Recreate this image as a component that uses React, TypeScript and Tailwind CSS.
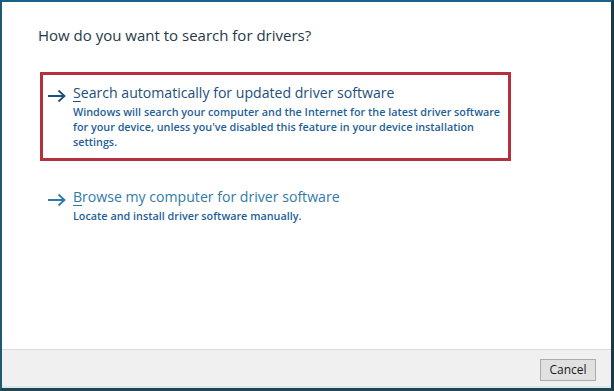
import React from "react";

const font = { fontFamily: '"Open Sans", "Noto Sans", sans-serif' };

function Arrow({ className }: { className?: string }) {
  return (
    <svg width="20" height="14" viewBox="0 0 20 14" className={className}>
      <path d="M1 7h16M11.5 1.5 17.5 7l-6 5.5" fill="none" stroke="currentColor" strokeWidth="1.8" />
    </svg>
  );
}

function Option({
  first,
  rest,
  lines,
  tone,
}: {
  first: string;
  rest: string;
  lines: string[];
  tone: string;
}) {
  return (
    <div className="flex items-start">
      <Arrow className={`mt-[6px] w-[20px] shrink-0 ${tone}`} />
      <div className="ml-[6px]">
        <div className={`whitespace-nowrap text-[14.1px] leading-[20px] ${tone}`}>
          <span className="underline decoration-1 underline-offset-[3px]">{first}</span>
          {rest}
        </div>
        <div className="mt-[1px] whitespace-nowrap text-[10.8px] font-semibold leading-[15px] text-[#1f5f99]">
          {lines.map((l) => (
            <div key={l}>{l}</div>
          ))}
        </div>
      </div>
    </div>
  );
}

export default function App() {
  return (
    <div
      style={font}
      className="flex h-[391px] w-[614px] flex-col border-t-2 border-l-2 border-r-[3px] border-b-[3px] border-t-[#1d5f86] border-l-[#1f5a75] border-r-[#1b3946] border-b-[#24434f] bg-white"
    >
      <div className="flex-1 pl-[36px] pt-[22px]">
        <h1 className="text-[15px] leading-[22px] text-[#27384a]">How do you want to search for drivers?</h1>

        <div className="ml-[2px] mt-[26px] h-[89px] w-[471px] border-[3px] border-[#b5303c] pl-[4px] pt-[8px]">
          <Option
            first="S"
            rest="earch automatically for updated driver software"
            tone="text-[#1c4f7c]"
            lines={[
              "Windows will search your computer and the Internet for the latest driver software",
              "for your device, unless you've disabled this feature in your device installation",
              "settings.",
            ]}
          />
        </div>

        <div className="ml-[9px] mt-[26px]">
          <Option
            first="B"
            rest="rowse my computer for driver software"
            tone="text-[#2f7ba8]"
            lines={["Locate and install driver software manually."]}
          />
        </div>
      </div>

      <div className="flex h-[39px] items-start justify-end border-t border-[#dcdcdc] bg-[#f0f0f0] pr-[15px] pt-[9px] shadow-[inset_0_-2px_0_#d3eaf0]">
        <button className="h-[22px] w-[56px] border border-[#adadad] bg-[#e1e1e1] text-[12px] leading-[20px] text-[#1a1a1a]">
          Cancel
        </button>
      </div>
    </div>
  );
}
